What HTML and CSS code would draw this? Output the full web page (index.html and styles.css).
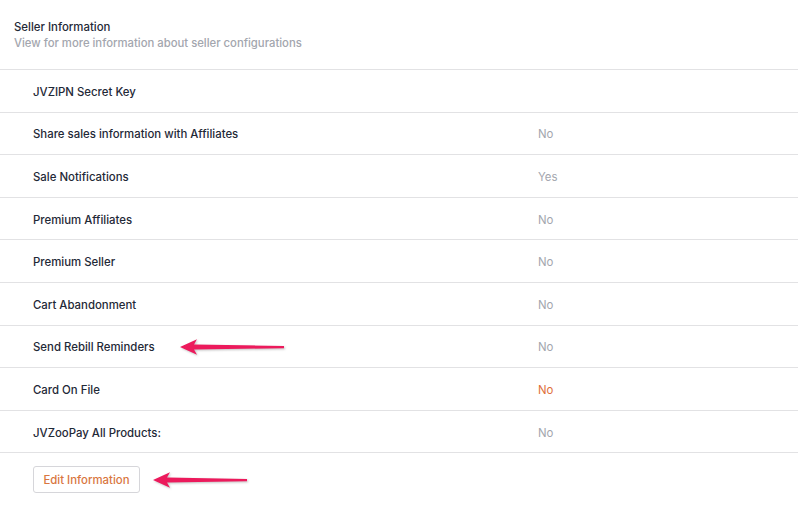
FILE: index.html
```html
<!DOCTYPE html>
<html lang="en">
<head>
  <meta charset="UTF-8" />
  <meta name="viewport" content="width=device-width, initial-scale=1.0" />
  <title>Seller Information</title>
  <link rel="stylesheet" href="styles.css">
</head>
<body>
  <div class="panel">
    <div class="panel-head">
      <h3>Seller Information</h3>
      <p>View for more information about seller configurations</p>
    </div>

    <div class="row"><span class="label">JVZIPN Secret Key</span><span class="value"></span></div>
    <div class="row"><span class="label">Share sales information with Affiliates</span><span class="value">No</span></div>
    <div class="row"><span class="label">Sale Notifications</span><span class="value">Yes</span></div>
    <div class="row"><span class="label">Premium Affiliates</span><span class="value">No</span></div>
    <div class="row"><span class="label">Premium Seller</span><span class="value">No</span></div>
    <div class="row"><span class="label">Cart Abandonment</span><span class="value">No</span></div>
    <div class="row">
      <span class="label">Send Rebill Reminders</span><span class="value">No</span>
      <svg class="arrow arrow-rebill" width="110" height="18" viewBox="0 0 110 18">
        <path d="M2 9 L19 1.2 L16 6.6 L106 7.9 L106 10.3 L16 11.4 L19 16.8 Z" />
      </svg>
    </div>
    <div class="row"><span class="label">Card On File</span><span class="value warn">No</span></div>
    <div class="row"><span class="label">JVZooPay All Products:</span><span class="value">No</span></div>

    <div class="actions">
      <button class="edit-btn">Edit Information</button>
      <svg class="arrow arrow-edit" width="100" height="18" viewBox="0 0 100 18">
        <path d="M2 9 L19 1.2 L16 6.6 L96 7.9 L96 10.3 L16 11.4 L19 16.8 Z" />
      </svg>
    </div>
  </div>
</body>
</html>
```

FILE: styles.css
```css
body {
  margin: 0;
  background: #fff;
  font-family: Inter, "Noto Sans", sans-serif;
  color: #1f2937;
}
.panel {
  width: 798px;
}
.panel-head {
  padding: 19px 14px 0;
  height: 50px;
  border-bottom: 1px solid #e2e2e4;
}
.panel-head h3 {
  margin: 0;
  font-size: 11.4px;
  font-weight: 500;
  line-height: 16px;
  color: #1f2937;
}
.panel-head p {
  margin: 0;
  font-size: 11.3px;
  font-weight: 500;
  line-height: 16px;
  color: #a3a6ae;
}
.row {
  position: relative;
  box-sizing: border-box;
  display: grid;
  grid-template-columns: 505px 1fr;
  align-items: center;
  height: 42.6px;
  padding: 2px 0 0 33px;
  border-bottom: 1px solid #e2e2e4;
  font-size: 11.4px;
  font-weight: 500;
}
.label {
  color: #1f2937;
}
.value {
  color: #a3a6ae;
  font-weight: 400;
}
.value.warn {
  color: #e0703a;
}
.actions {
  position: relative;
  padding: 13px 33px;
}
.edit-btn {
  font-family: inherit;
  font-size: 11.4px;
  font-weight: 500;
  color: #d9773f;
  background: #fff;
  border: 1px solid #d6d6da;
  border-radius: 3px;
  height: 27px;
  width: 107px;
  padding: 0;
}
.arrow {
  position: absolute;
  fill: #ec1a5c;
  filter: drop-shadow(1px 1px 1px rgba(0, 0, 0, 0.25));
}
.arrow-rebill {
  left: 178px;
  top: 12px;
}
.arrow-edit {
  left: 151px;
  top: 18px;
}
```
